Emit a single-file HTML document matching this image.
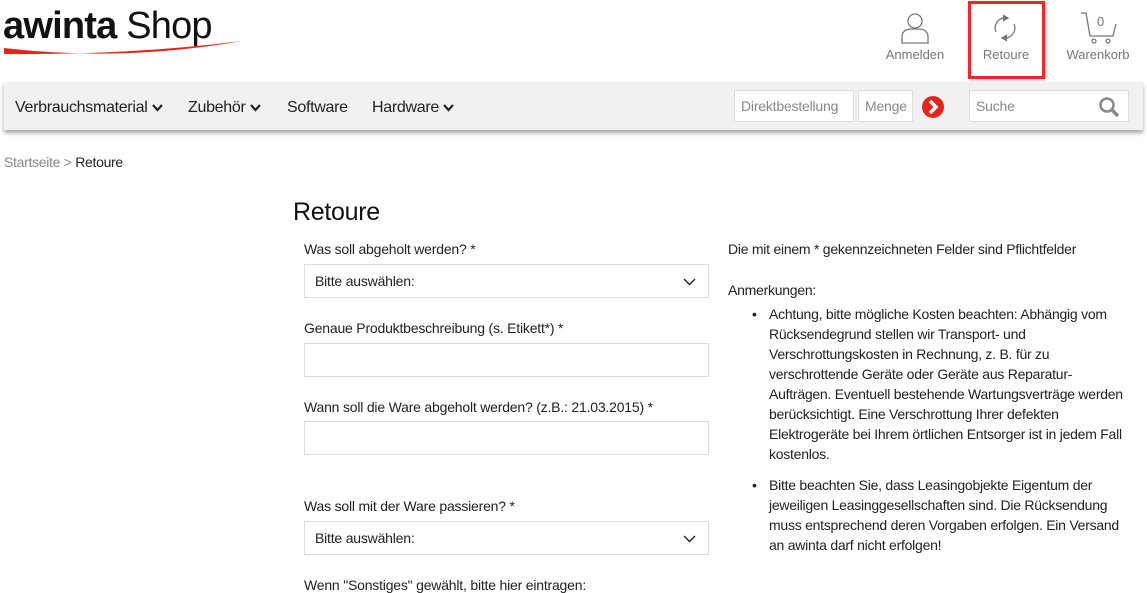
<!DOCTYPE html>
<html><head><meta charset="utf-8"><style>
*{box-sizing:border-box;margin:0;padding:0}
body{width:1147px;height:593px;overflow:hidden;background:#fff;font-family:"Liberation Sans",Arial,sans-serif;color:#222;position:relative}
.a{position:absolute;white-space:nowrap}
.nav{position:absolute;left:4px;top:82px;width:1139px;height:48px;background:#f1f1f1;box-shadow:0 3px 4px rgba(0,0,0,.35)}
.ni{position:absolute;top:17px;font-size:16px;color:#222;letter-spacing:-0.3px}
.box{position:absolute;background:#fff;border:1px solid #ddd;font-size:14px;color:#888;padding:0 6px;line-height:30px;letter-spacing:-0.2px}
.lbl{position:absolute;left:304px;font-size:14px;color:#222;letter-spacing:-0.2px}
.inp{position:absolute;left:304px;width:405px;height:34px;border:1px solid #ddd;background:#fff;font-size:14px;line-height:32px;padding-left:10px;color:#222;letter-spacing:-0.2px}
.hi{position:absolute;font-size:13px;color:#777;text-align:center}
.rt{font-size:14px;line-height:20px;color:#222;letter-spacing:-0.25px}
</style></head><body>
<div class="a" style="left:3px;top:5px;font-size:38px;letter-spacing:-0.8px;color:#111"><b>awinta</b> Shop</div>
<svg class="a" style="left:2px;top:38px" width="242" height="22"><path d="M2 10 Q120 24 240 3 Q130 17 2 16Z" fill="#e3261c"/></svg>
<svg class="a" style="left:900px;top:12px" width="30" height="32" fill="none" stroke="#777" stroke-width="1.3"><circle cx="15" cy="9" r="7"/><path d="M2 31 V25 Q2 18 10 17 H20 Q28 18 28 25 V31 Z"/></svg>
<div class="hi" style="left:880px;top:47px;width:70px">Anmelden</div>
<div class="a" style="left:968px;top:1px;width:77px;height:78px;border:3px solid #e8282e;box-shadow:1px 1px 3px rgba(0,0,0,.3)"></div>
<svg class="a" style="left:990px;top:12px" width="30" height="32" fill="none" stroke="#777" stroke-width="1.3"><path d="M6 20 A10 10 0 0 1 16 6"/><path d="M13 3 L18 6 L13 9" fill="#777"/><path d="M24 12 A10 10 0 0 1 14 26"/><path d="M17 23 L12 26 L17 29" fill="#777"/></svg>
<div class="hi" style="left:971px;top:47px;width:70px">Retoure</div>
<svg class="a" style="left:1080px;top:10px" width="40" height="34" fill="none" stroke="#777" stroke-width="1.3"><path d="M1 3 H6 L10 26 H33 L36 14"/><circle cx="14" cy="31" r="2"/><circle cx="28" cy="31" r="2"/></svg>
<div class="hi" style="left:1097px;top:14px">0</div>
<div class="hi" style="left:1062px;top:47px;width:72px">Warenkorb</div>
<div class="nav">
<div class="ni" style="left:11px">Verbrauchsmaterial <svg width="11" height="8"><path d="M1 1 L5.5 6 L10 1" stroke="#222" stroke-width="2.2" fill="none"/></svg></div>
<div class="ni" style="left:184px">Zubehör <svg width="11" height="8"><path d="M1 1 L5.5 6 L10 1" stroke="#222" stroke-width="2.2" fill="none"/></svg></div>
<div class="ni" style="left:283px">Software</div>
<div class="ni" style="left:368px">Hardware <svg width="11" height="8"><path d="M1 1 L5.5 6 L10 1" stroke="#222" stroke-width="2.2" fill="none"/></svg></div>
<div class="box" style="left:730px;top:8px;width:120px;height:32px">Direktbestellung</div>
<div class="box" style="left:854px;top:8px;width:55px;height:32px">Menge</div>
<svg class="a" style="left:918px;top:14px" width="22" height="22"><circle cx="11" cy="11" r="11" fill="#e3261c"/><path d="M8 5 L14 11 L8 17" stroke="#fff" stroke-width="3.5" fill="none"/></svg>
<div class="box" style="left:965px;top:8px;width:160px;height:32px">Suche</div>
<svg class="a" style="left:1094px;top:14px" width="22" height="22" fill="none" stroke="#888" stroke-width="2.5"><circle cx="9" cy="9" r="6.5"/><path d="M14 14 L20 20" stroke-width="3.5"/></svg>
</div>
<div class="a" style="left:4px;top:154px;font-size:14px;color:#888;letter-spacing:-0.3px">Startseite &gt; <span style="color:#222">Retoure</span></div>
<div class="a" style="left:293px;top:198px;font-size:25px;color:#111;letter-spacing:-0.3px">Retoure</div>
<div class="lbl" style="top:241px">Was soll abgeholt werden? *</div>
<div class="inp" style="top:264px">Bitte auswählen:<svg style="position:absolute;right:12px;top:13px" width="13" height="8"><path d="M1 1 L6.5 6.5 L12 1" stroke="#222" stroke-width="1.4" fill="none"/></svg></div>
<div class="lbl" style="top:320px">Genaue Produktbeschreibung (s. Etikett*) *</div>
<div class="inp" style="top:343px"></div>
<div class="lbl" style="top:399px">Wann soll die Ware abgeholt werden? (z.B.: 21.03.2015) *</div>
<div class="inp" style="top:421px"></div>
<div class="lbl" style="top:498px">Was soll mit der Ware passieren? *</div>
<div class="inp" style="top:521px">Bitte auswählen:<svg style="position:absolute;right:12px;top:13px" width="13" height="8"><path d="M1 1 L6.5 6.5 L12 1" stroke="#222" stroke-width="1.4" fill="none"/></svg></div>
<div class="lbl" style="top:577px">Wenn "Sonstiges" gewählt, bitte hier eintragen:</div>
<div class="a rt" style="left:728px;top:239px">Die mit einem * gekennzeichneten Felder sind Pflichtfelder</div>
<div class="a rt" style="left:728px;top:280px">Anmerkungen:</div>
<div class="a rt" style="left:752px;top:304px">•</div>
<div class="a rt" style="left:769px;top:304px">Achtung, bitte mögliche Kosten beachten: Abhängig vom<br>Rücksendegrund stellen wir Transport- und<br>Verschrottungskosten in Rechnung, z. B. für zu<br>verschrottende Geräte oder Geräte aus Reparatur-<br>Aufträgen. Eventuell bestehende Wartungsverträge werden<br>berücksichtigt. Eine Verschrottung Ihrer defekten<br>Elektrogeräte bei Ihrem örtlichen Entsorger ist in jedem Fall<br>kostenlos.</div>
<div class="a rt" style="left:752px;top:475px">•</div>
<div class="a rt" style="left:769px;top:475px">Bitte beachten Sie, dass Leasingobjekte Eigentum der<br>jeweiligen Leasinggesellschaften sind. Die Rücksendung<br>muss entsprechend deren Vorgaben erfolgen. Ein Versand<br>an awinta darf nicht erfolgen!</div>
</body></html>
